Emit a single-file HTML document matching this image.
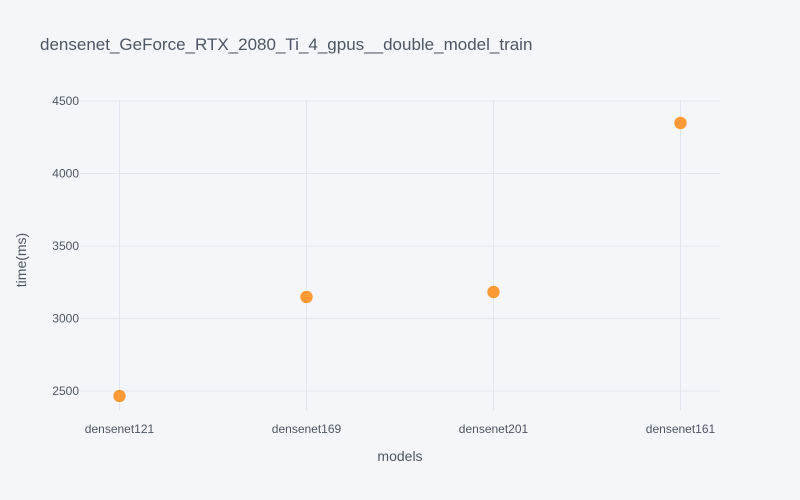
<!DOCTYPE html>
<html><head><meta charset="utf-8"><style>
html,body{margin:0;padding:0;background:#f5f6f9;}
svg{display:block;font-family:"Liberation Sans",sans-serif;}
</style></head><body>
<svg width="800" height="500" xmlns="http://www.w3.org/2000/svg">
<rect width="800" height="500" fill="#f5f6f9"/>
<g stroke="#e1e5ed" stroke-width="1">
<line x1="119.5" y1="100" x2="119.5" y2="410"/>
<line x1="306.5" y1="100" x2="306.5" y2="410"/>
<line x1="493.5" y1="100" x2="493.5" y2="410"/>
<line x1="680.5" y1="100" x2="680.5" y2="410"/>
<line x1="80" y1="101" x2="720" y2="101"/>
<line x1="80" y1="173.5" x2="720" y2="173.5"/>
<line x1="80" y1="246" x2="720" y2="246"/>
<line x1="80" y1="318.5" x2="720" y2="318.5"/>
<line x1="80" y1="391" x2="720" y2="391"/>
</g>
<g fill="#fd9a35" stroke="#f5f6f9" stroke-width="0.5">
<circle cx="119.5" cy="396" r="6.5"/>
<circle cx="306.5" cy="297" r="6.5"/>
<circle cx="493.5" cy="292" r="6.5"/>
<circle cx="680.5" cy="123" r="6.5"/>
</g>
<g fill="#4d5663" font-size="12" text-anchor="end">
<text x="79" y="105">4500</text>
<text x="79" y="177.5">4000</text>
<text x="79" y="250">3500</text>
<text x="79" y="322.5">3000</text>
<text x="79" y="395">2500</text>
</g>
<g fill="#4d5663" font-size="12" text-anchor="middle">
<text x="119.5" y="433">densenet121</text>
<text x="306.5" y="433">densenet169</text>
<text x="493.5" y="433">densenet201</text>
<text x="680.5" y="433">densenet161</text>
</g>
<text x="400" y="461" fill="#4d5663" font-size="14" text-anchor="middle">models</text>
<text transform="translate(26,260) rotate(-90)" fill="#4d5663" font-size="14" text-anchor="middle">time(ms)</text>
<text x="40" y="50" fill="#4d5663" font-size="17">densenet_GeForce_RTX_2080_Ti_4_gpus__double_model_train</text>
</svg>
</body></html>
